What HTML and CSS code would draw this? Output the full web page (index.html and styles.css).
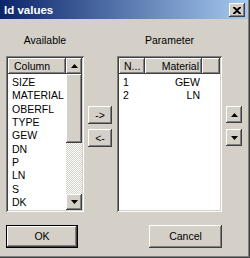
FILE: index.html
```html
<!DOCTYPE html>
<html>
<head>
<meta charset="utf-8">
<link rel="stylesheet" href="styles.css">
</head>
<body>
<div class="window">
  <div class="titlebar">
    <span class="title">Id values</span>
    <span class="close btn-raised"><svg width="8" height="7" viewBox="0 0 8 7"><path d="M0 0h2l2 2 2-2h2v1L5 3.5 8 6v1H6L4 5 2 7H0V6l3-2.5L0 1z" fill="#000"/></svg></span>
  </div>
  <div class="body">
    <div class="main">
      <div class="col-left">
        <div class="label">Available</div>
        <div class="list">
          <div class="list-main">
            <div class="header">
              <div class="hcell hcell-col">Column</div>
            </div>
            <div class="items">
              <div class="row">SIZE</div>
              <div class="row">MATERIAL</div>
              <div class="row">OBERFL</div>
              <div class="row">TYPE</div>
              <div class="row">GEW</div>
              <div class="row">DN</div>
              <div class="row">P</div>
              <div class="row">LN</div>
              <div class="row">S</div>
              <div class="row">DK</div>
            </div>
          </div>
          <div class="scrollbar">
            <div class="sb-btn btn-raised"><svg width="7" height="4" viewBox="0 0 7 4"><path d="M3.5 0L7 4H0z" fill="#000"/></svg></div>
            <div class="sb-thumb btn-raised"></div>
            <div class="sb-track"></div>
            <div class="sb-btn btn-raised"><svg width="7" height="4" viewBox="0 0 7 4"><path d="M0 0h7L3.5 4z" fill="#000"/></svg></div>
          </div>
        </div>
      </div>
      <div class="col-mid">
        <div class="mbtn btn-raised">-&gt;</div>
        <div class="mbtn btn-raised">&lt;-</div>
      </div>
      <div class="col-right">
        <div class="label">Parameter</div>
        <div class="list list-right">
          <div class="list-main">
            <div class="header">
              <div class="hcell hcell-n">N...</div>
              <div class="hcell hcell-mat">Material</div>
              <div class="hcell hcell-rest"></div>
            </div>
            <div class="items">
              <div class="prow"><span class="pn">1</span><span class="pm">GEW</span></div>
              <div class="prow"><span class="pn">2</span><span class="pm">LN</span></div>
            </div>
          </div>
        </div>
      </div>
      <div class="col-btns">
        <div class="sbtn btn-raised"><svg width="7" height="4" viewBox="0 0 7 4"><path d="M3.5 0L7 4H0z" fill="#000"/></svg></div>
        <div class="sbtn btn-raised"><svg width="7" height="4" viewBox="0 0 7 4"><path d="M0 0h7L3.5 4z" fill="#000"/></svg></div>
      </div>
    </div>
    <div class="footer">
      <div class="fbtn fbtn-default">OK</div>
      <div class="fbtn btn-raised">Cancel</div>
    </div>
  </div>
</div>
</body>
</html>
```
FILE: styles.css
```css
* { box-sizing: border-box; }
html, body { margin: 0; padding: 0; }
body {
  width: 250px;
  height: 258px;
  overflow: hidden;
  background: #d4d0c8;
  font-family: "Liberation Sans", Arial, sans-serif;
  font-size: 10.5px;
  color: #000;
}
.window {
  width: 250px;
  height: 258px;
  background: #d4d0c8;
  border-right: 1px solid #404040;
  border-bottom: 1px solid #404040;
  box-shadow: inset -1px -1px #808080;
  display: flex;
  flex-direction: column;
}
.titlebar {
  height: 19px;
  margin-right: 1px;
  background: linear-gradient(to right, #0a246a, #a6caf0);
  display: flex;
  align-items: center;
  justify-content: space-between;
  padding: 1px 3px 0 4px;
}
.title {
  color: #fff;
  font-weight: bold;
  font-size: 11.5px;
  line-height: 14px;
}
.close {
  width: 16px;
  height: 14px;
  display: flex;
  align-items: center;
  justify-content: center;
  background: #d4d0c8;
}
.btn-raised {
  background: #d4d0c8;
  box-shadow: inset -1px -1px #404040, inset 1px 1px #fff, inset -2px -2px #808080, inset 2px 2px #d4d0c8;
}
.body {
  padding: 0 0 0 6px;
  flex: 1;
  display: flex;
  flex-direction: column;
}
.main {
  display: flex;
}
.label {
  height: 37px;
  padding-top: 15px;
  line-height: 13px;
  text-align: center;
}
.col-left { width: 78px; }
.col-right { width: 105px; }
.list {
  height: 156px;
  padding: 2px;
  background: #fff;
  box-shadow: inset 1px 1px #808080, inset -1px -1px #fff, inset 2px 2px #404040, inset -2px -2px #d4d0c8;
  display: flex;
}
.list-main {
  flex: 1;
  display: flex;
  flex-direction: column;
  min-width: 0;
}
.header {
  height: 16px;
  display: flex;
}
.hcell {
  height: 16px;
  line-height: 16px;
  background: #d4d0c8;
  box-shadow: inset -1px -1px #404040, inset 1px 1px #fff, inset -2px -2px #808080;
  white-space: nowrap;
  overflow: hidden;
}
.hcell-col { flex: 1; padding-left: 6px; }
.hcell-n { width: 26px; padding-left: 5px; }
.hcell-mat { width: 57px; text-align: right; padding-right: 3px; }
.hcell-rest { flex: 1; }
.items { padding-top: 2px; }
.row {
  height: 13.33px;
  line-height: 13.33px;
  padding-left: 4px;
  white-space: nowrap;
}
.prow {
  height: 13px;
  line-height: 13px;
  display: flex;
}
.pn { width: 26px; padding-left: 4px; }
.pm { width: 55px; text-align: right; }
.scrollbar {
  width: 16px;
  display: flex;
  flex-direction: column;
}
.sb-btn {
  height: 16px;
  display: flex;
  align-items: center;
  justify-content: center;
}
.sb-thumb { height: 69px; }
.sb-track {
  flex: 1;
  background: repeating-conic-gradient(#fff 0 25%, #d4d0c8 0 50%) 0 0 / 2px 2px;
}
.col-mid {
  width: 33px;
  padding: 87px 0 0 4px;
  display: flex;
  flex-direction: column;
  gap: 5px;
}
.mbtn {
  width: 24px;
  height: 18px;
  line-height: 18px;
  text-align: center;
}
.col-btns {
  padding: 87px 0 0 4px;
  display: flex;
  flex-direction: column;
  gap: 6px;
}
.sbtn {
  width: 16px;
  height: 17px;
  display: flex;
  align-items: center;
  justify-content: center;
}
.footer {
  margin-top: 13px;
  width: 216px;
  display: flex;
  justify-content: space-between;
}
.fbtn {
  width: 73px;
  height: 23px;
  line-height: 23px;
  text-align: center;
}
.fbtn-default {
  width: 72px;
  background: #d4d0c8;
  border: 1px solid #000;
  line-height: 21px;
  box-shadow: inset -1px -1px #404040, inset 1px 1px #fff, inset -2px -2px #808080;
}
```
